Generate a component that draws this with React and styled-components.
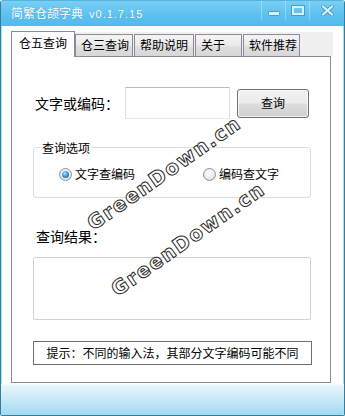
import React from 'react';
import styled, { createGlobalStyle } from 'styled-components';

const CJK = `"Noto Sans CJK SC", "Noto Sans", sans-serif`;

const Global = createGlobalStyle`
  html, body { margin: 0; padding: 0; background: #fff; }
  body { font-family: ${CJK}; color: #000; }
  * { box-sizing: border-box; }
`;

const Window = styled.div`
  position: relative;
  width: 345px;
  height: 416px;
  border: 1px solid #2f7fa0;
  border-top-color: #55b4de;
  border-radius: 3px 3px 2px 2px;
  display: flex;
  flex-direction: column;
  overflow: hidden;
  background: #fff;
`;

const TitleBar = styled.div`
  height: 25px;
  flex: none;
  display: flex;
  align-items: center;
  padding-left: 10px;
  background: linear-gradient(#78cff4, #5bc0ee 60%, #52bbec);
`;

const Title = styled.div`
  color: #fff;
  font-size: 12px;
  line-height: 16px;
  text-shadow: 0 0 1px rgba(20, 90, 130, 0.35);
  white-space: nowrap;
`;

const Version = styled.span`
  font-family: "Liberation Sans", sans-serif;
  font-size: 11px;
  letter-spacing: 1px;
  margin-left: 6px;
`;

const Controls = styled.div`
  margin-left: auto;
  align-self: flex-start;
  display: flex;
  height: 19px;
`;

const Ctrl = styled.div`
  width: ${p => p.$w}px;
  height: 100%;
  display: flex;
  align-items: center;
  justify-content: center;
  padding-top: ${p => p.$pt || 0}px;
  border-left: 1px solid rgba(255, 255, 255, 0.3);
`;

const Body = styled.div`
  flex: 1;
  border-left: 1px solid #a9ddf4;
  border-right: 1px solid #a9ddf4;
  padding: 5px 0 1px 9px;
  display: flex;
  flex-direction: column;
`;

const TabBar = styled.div`
  display: flex;
  height: 26px;
  align-items: flex-start;
`;

const ActiveTab = styled.div`
  position: relative;
  z-index: 1;
  width: 64px;
  height: 26px;
  background: #fff;
  border: 1px solid #898c95;
  border-bottom: none;
  font-size: 12px;
  line-height: 22px;
  padding-left: 7px;
`;

const Strip = styled.div`
  margin-top: 1px;
  width: 258px;
  height: 24px;
  background: #f0f0f0;
  display: flex;
  gap: 1px;
  padding-top: 2px;
`;

const Tab = styled.div`
  width: ${p => p.$w}px;
  height: 23px;
  border: 1px solid #898c95;
  border-bottom: none;
  background: linear-gradient(#f4f4f4, #ebebeb 45%, #dedede 55%, #d6d6d6);
  font-size: 12px;
  line-height: 19px;
  padding-left: ${p => p.$pl}px;
  white-space: nowrap;
`;

const Panel = styled.div`
  margin-top: -1px;
  width: 320px;
  height: 327px;
  border: 1px solid #898c95;
  display: flex;
  flex-direction: column;
  align-items: flex-start;
`;

const InputRow = styled.div`
  margin-top: 30px;
  padding-left: 23px;
  display: flex;
  align-items: center;
  height: 32px;
`;

const Label = styled.div`
  width: ${p => p.$w || 'auto'};
  font-size: 14px;
  line-height: 20px;
  margin-left: ${p => p.$ml || 0}px;
  margin-top: ${p => p.$mt || 0}px;
`;

const TextBox = styled.div`
  width: 105px;
  height: 32px;
  border: 1px solid #dbdfe6;
  border-top-color: #b9bec6;
  border-bottom-color: #e3e9ef;
  background: #fff;
`;

const Button = styled.div`
  margin-left: 7px;
  width: 72px;
  height: 29px;
  border: 1px solid #707070;
  border-radius: 3px;
  background: linear-gradient(#f2f2f2, #ebebeb 48%, #dddddd 52%, #cfcfcf);
  box-shadow: inset 0 0 0 1px rgba(255, 255, 255, 0.7);
  font-size: 12px;
  line-height: 26px;
  text-align: center;
`;

const Group = styled.div`
  margin-top: 28px;
  margin-left: 21px;
  width: 278px;
  height: 51px;
  border: 1px solid #d5dfe5;
  border-radius: 3px;
  display: flex;
  flex-direction: column;
  align-items: flex-start;
`;

const Legend = styled.div`
  margin-top: -8px;
  margin-left: 7px;
  padding: 0 1px;
  background: #fff;
  font-size: 12px;
  line-height: 15px;
`;

const RadioRow = styled.div`
  margin-top: 11px;
  padding-left: 25px;
  display: grid;
  grid-template-columns: 144px auto;
  height: 16px;
  align-items: center;
`;

const RadioItem = styled.div`
  display: flex;
  align-items: center;
  gap: 3px;
  font-size: 12px;
  line-height: 16px;
`;

const RadioCircle = styled.span`
  width: 13px;
  height: 13px;
  border-radius: 50%;
  border: 1px solid #8e8f8f;
  background: radial-gradient(circle at 50% 40%, #ffffff 0%, #f1f1f1 45%, #cfcfcf 100%);
  display: flex;
  align-items: center;
  justify-content: center;
  &::after {
    content: '';
    display: ${p => (p.$checked ? 'block' : 'none')};
    width: 7px;
    height: 7px;
    border-radius: 50%;
    background: radial-gradient(circle at 40% 35%, #b8e6ff 0%, #3c9ce0 45%, #0d4f8b 100%);
  }
`;

const ResultBox = styled.div`
  margin-top: 11px;
  margin-left: 21px;
  width: 278px;
  height: 63px;
  border: 1px solid #ccd3db;
  border-radius: 2px;
`;

const Hint = styled.div`
  margin-top: 21px;
  margin-left: 21px;
  width: 279px;
  height: 24px;
  border: 1px solid #6e6e6e;
  font-size: 12px;
  line-height: 22px;
  text-align: center;
  white-space: nowrap;
`;

const Footer = styled.div`
  height: 31px;
  flex: none;
  border-top: 1px solid #f2f9fd;
  background: linear-gradient(#e9f5fc, #c6e8f8 50%, #a3d9f3);
`;

const Watermark = styled.div`
  position: absolute;
  left: ${p => p.$x}px;
  top: ${p => p.$y}px;
  transform: translate(-50%, -50%) rotate(-35deg);
  font-family: "DejaVu Sans", sans-serif;
  font-weight: bold;
  font-size: 20px;
  letter-spacing: 1.5px;
  color: #fff;
  -webkit-text-stroke: 1px #2a2a2a;
  white-space: nowrap;
  pointer-events: none;
`;

const MinIcon = () => (
  <svg width="12" height="5" viewBox="0 0 12 5">
    <rect x="0.5" y="0.5" width="11" height="4" rx="1" fill="#d9f0fa" stroke="#4a9cc2" strokeWidth="1" />
  </svg>
);

const MaxIcon = () => (
  <svg width="14" height="11" viewBox="0 0 14 11">
    <rect x="0.5" y="0.5" width="13" height="10" fill="none" stroke="#4a9cc2" strokeWidth="1" />
    <rect x="2" y="2" width="10" height="7" fill="none" stroke="#d9f0fa" strokeWidth="2" />
  </svg>
);

const CloseIcon = () => (
  <svg width="13" height="11" viewBox="0 0 13 11">
    <path d="M2 1.5 L11 9.5 M11 1.5 L2 9.5" stroke="#4a9cc2" strokeWidth="4" strokeLinecap="round" />
    <path d="M2 1.5 L11 9.5 M11 1.5 L2 9.5" stroke="#d9f0fa" strokeWidth="2.2" strokeLinecap="round" />
  </svg>
);

export default function App() {
  return (
    <>
      <Global />
      <Window>
        <TitleBar>
          <Title>
            简繁仓颉字典<Version>v0.1.7.15</Version>
          </Title>
          <Controls>
            <Ctrl $w={24} $pt={5}><MinIcon /></Ctrl>
            <Ctrl $w={24}><MaxIcon /></Ctrl>
            <Ctrl $w={35}><CloseIcon /></Ctrl>
          </Controls>
        </TitleBar>
        <Body>
          <TabBar>
            <ActiveTab>仓五查询</ActiveTab>
            <Strip>
              <Tab $w={58} $pl={5}>仓三查询</Tab>
              <Tab $w={60} $pl={5}>帮助说明</Tab>
              <Tab $w={47} $pl={5}>关于</Tab>
              <Tab $w={57} $pl={5}>软件推荐</Tab>
            </Strip>
          </TabBar>
          <Panel>
            <InputRow>
              <Label $w="90px">文字或编码：</Label>
              <TextBox />
              <Button>查询</Button>
            </InputRow>
            <Group>
              <Legend>查询选项</Legend>
              <RadioRow>
                <RadioItem><RadioCircle $checked />文字查编码</RadioItem>
                <RadioItem><RadioCircle />编码查文字</RadioItem>
              </RadioRow>
            </Group>
            <Label $ml={24} $mt={28}>查询结果：</Label>
            <ResultBox />
            <Hint>提示：不同的输入法，其部分文字编码可能不同</Hint>
          </Panel>
        </Body>
        <Footer />
        <Watermark $x={163} $y={172}>GreenDown.cn</Watermark>
        <Watermark $x={187} $y={238}>GreenDown.cn</Watermark>
      </Window>
    </>
  );
}
